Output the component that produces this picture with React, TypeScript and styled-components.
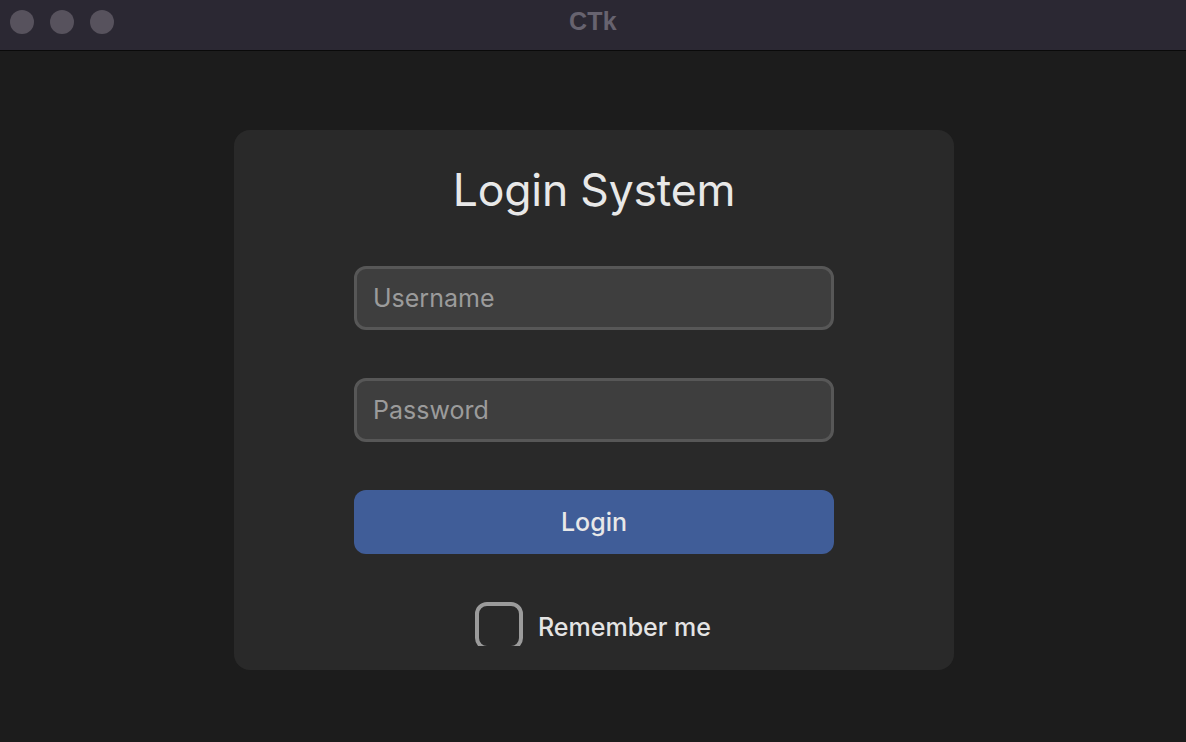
import React from "react";
import styled, { createGlobalStyle } from "styled-components";

const Global = createGlobalStyle`
  html, body { margin: 0; padding: 0; background: #1c1c1c; }
  body { font-family: Inter, "Noto Sans", "Liberation Sans", sans-serif; }
  * { box-sizing: border-box; }
`;

const Window = styled.div`
  width: 1186px;
  height: 742px;
  display: flex;
  flex-direction: column;
  background: #1c1c1c;
  overflow: hidden;
`;

const TitleBar = styled.div`
  position: relative;
  height: 51px;
  flex: none;
  background: #2b2833;
  border-bottom: 1px solid #0a0a0a;
  display: flex;
  align-items: center;
  justify-content: center;
`;

const Lights = styled.div`
  position: absolute;
  left: 10px;
  top: 10px;
  display: flex;
  gap: 16px;
`;

const Light = styled.span`
  width: 24px;
  height: 24px;
  border-radius: 50%;
  background: #57525d;
`;

const WindowTitle = styled.div`
  margin-top: -7px;
  font-family: "Liberation Sans", Arial, sans-serif;
  font-weight: 700;
  font-size: 25px;
  color: #67636f;
  letter-spacing: 0.3px;
`;

const Content = styled.div`
  flex: 1;
  display: flex;
  justify-content: center;
  padding-top: 79px;
  padding-left: 2px;
`;

const Card = styled.div`
  width: 720px;
  height: 540px;
  background: #292929;
  border-radius: 16px;
  display: flex;
  flex-direction: column;
  align-items: center;
  padding-top: 34px;
  overflow: hidden;
`;

const Heading = styled.h1`
  margin: 0;
  font-weight: 400;
  font-size: 44.5px;
  line-height: 52px;
  color: #e8e8e8;
  letter-spacing: -0.2px;
`;

const Field = styled.input<{ $top: number }>`
  margin-top: ${(p) => p.$top}px;
  width: 480px;
  height: 64px;
  border: 3px solid #575757;
  border-radius: 12px;
  background: #3e3e3e;
  padding: 0 16px;
  font-family: inherit;
  font-size: 25px;
  color: #e8e8e8;
  outline: none;
  &::placeholder { color: #9b9b9b; }
`;

const Button = styled.button`
  margin-top: 48px;
  width: 480px;
  height: 64px;
  border: none;
  border-radius: 12px;
  background: #405d98;
  color: #e8e8e8;
  font-family: inherit;
  font-size: 25px;
  font-weight: 500;
  cursor: pointer;
`;

const CheckRow = styled.label`
  margin-top: 48px;
  margin-left: -2px;
  display: flex;
  align-items: flex-start;
  gap: 15px;
  height: 44px;
`;

const BoxClip = styled.span`
  width: 48px;
  height: 44px;
  overflow: hidden;
  display: block;
`;

const Box = styled.span`
  display: block;
  width: 48px;
  height: 48px;
  border: 4px solid #9b9b9b;
  border-radius: 12px;
`;

const CheckText = styled.span`
  margin-top: 10px;
  font-size: 25px;
  font-weight: 500;
  color: #e4e4e4;
`;

export default function App() {
  return (
    <Window>
      <Global />
      <TitleBar>
        <Lights>
          <Light />
          <Light />
          <Light />
        </Lights>
        <WindowTitle>CTk</WindowTitle>
      </TitleBar>
      <Content>
        <Card>
          <Heading>Login System</Heading>
          <Field $top={50} placeholder="Username" />
          <Field $top={48} placeholder="Password" type="password" />
          <Button>Login</Button>
          <CheckRow>
            <BoxClip>
              <Box />
            </BoxClip>
            <CheckText>Remember me</CheckText>
          </CheckRow>
        </Card>
      </Content>
    </Window>
  );
}
